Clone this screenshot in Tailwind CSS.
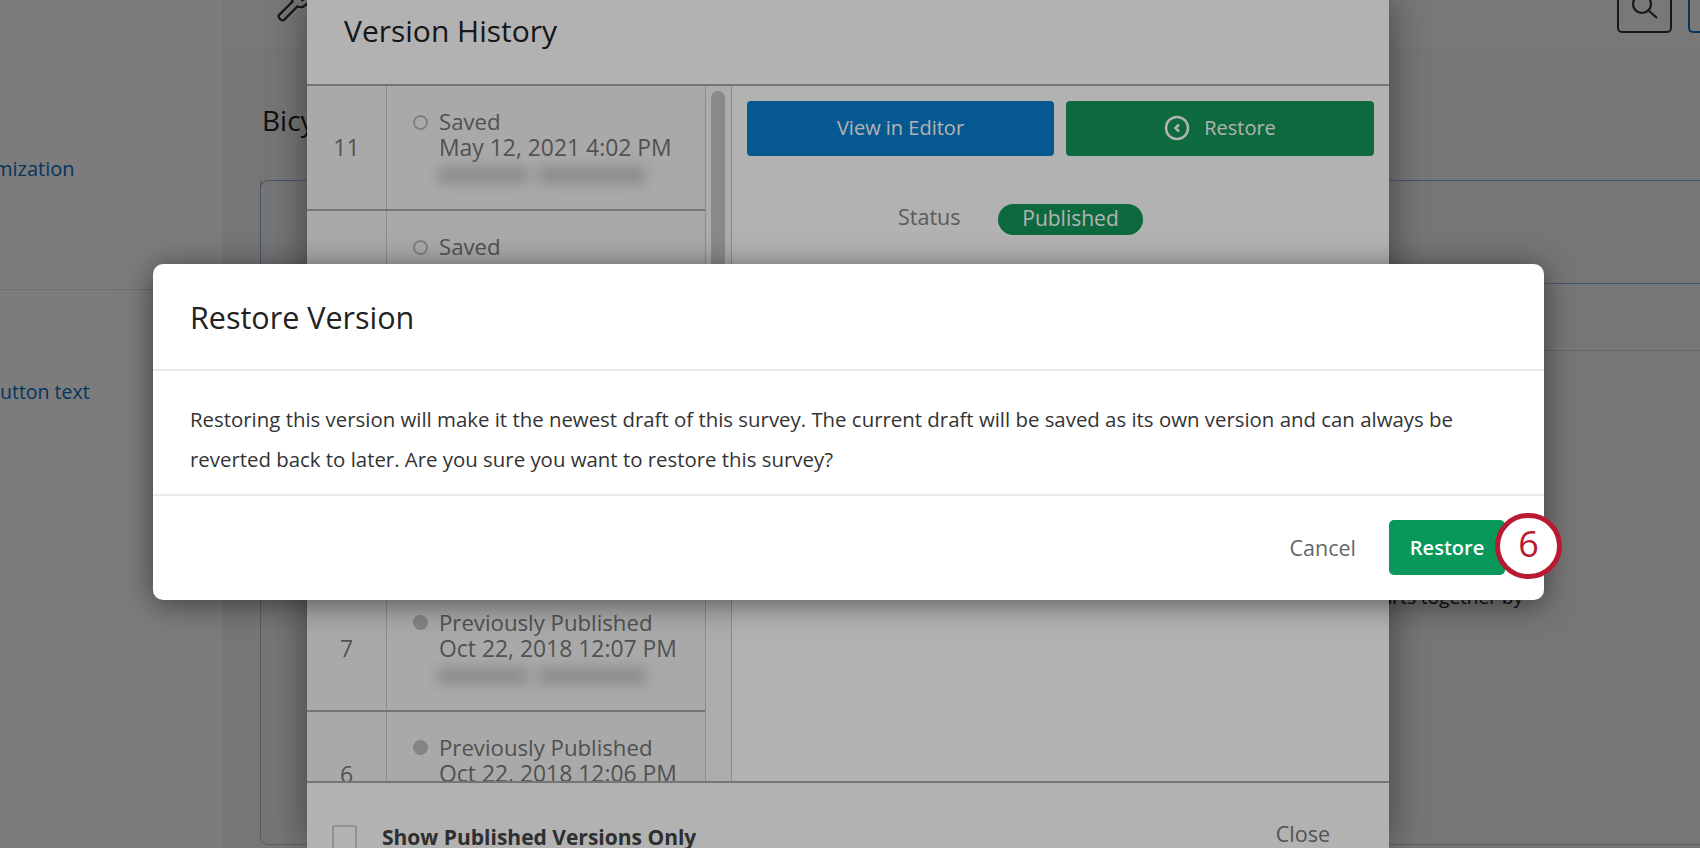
<!DOCTYPE html>
<html lang="en">
<head>
<meta charset="utf-8">
<title>Restore Version</title>
<script src="https://cdn.jsdelivr.net/npm/@tailwindcss/browser@4"></script>
</head>
<body class="m-0 overflow-hidden bg-white font-['Open_Sans',sans-serif]">
<div class="relative h-[848px] w-[1700px] overflow-hidden bg-white">

  <!-- Underlying page -->
  <div class="flex h-full w-full">
    <aside class="flex h-full w-[222px] shrink-0 flex-col bg-white">
      <div class="h-[290px] shrink-0 border-b border-[#e6e6e6] pt-[82px] text-[#0b6fc4]">
        <p class="-ml-[14px] h-[74px] overflow-hidden text-[24px] leading-[30px] text-[#222]">r</p>
        <p class="-ml-[6px] text-[20px] leading-[26px]">mization</p>
      </div>
      <div class="pt-[89px] text-[19.5px] leading-[26px] text-[#0b6fc4]">utton text</div>
    </aside>
    <main class="flex h-full flex-1 flex-col bg-[#f2f2f2]">
      <header class="flex h-[50px] shrink-0 items-end justify-between border-b border-[#e8e8e8] bg-[#f6f6f6] pb-[16px] pl-[52px]">
        <svg class="mb-[8px] h-[42px] w-[42px] text-[#333]" viewBox="0 0 34 34" fill="none" stroke="currentColor" stroke-width="1.9"><path d="M4 26l11-11c-2-5 3-11 9-9l-4 5 3 3 5-4c2 6-4 11-9 9L8 30c-2 1-5-2-4-4z"/></svg>
        <div class="flex items-end gap-[16px]">
          <div class="flex h-[60px] w-[55px] items-end justify-center rounded-[5px] border-2 border-[#333] pb-[6px]">
            <svg class="h-[30px] w-[30px] text-[#333]" viewBox="0 0 30 30" fill="none" stroke="currentColor" stroke-width="2.2"><circle cx="12" cy="9" r="9"/><path d="M18 15l9 8"/></svg>
          </div>
          <div class="h-[60px] w-[12px] rounded-l-[5px] border-2 border-r-0 border-[#0b6fc4]"></div>
        </div>
      </header>
      <div class="flex-1 pt-[48px] pl-[38px]">
        <h2 class="ml-[2px] text-[28px] leading-[44px] text-[#222]">Bicycle</h2>
        <div class="mt-[38px] h-[665px] rounded-bl-[8px] border-b border-l border-[#bcbcbc]">
          <div class="-ml-px h-[104px] rounded-tl-[8px] border-t border-b border-l border-[#8fb3dc]"></div>
          <div class="h-[67px] border-b border-[#d0d0d0]"></div>
          <p class="pt-[233px] pr-[177px] text-right text-[19px] leading-[26px] text-[#222]">parts together by</p>
        </div>
      </div>
    </main>
  </div>
  <div class="absolute inset-0 bg-black/30"></div>

  <!-- Version History dialog -->
  <section class="absolute top-0 left-[307px] flex h-[848px] w-[1082px] flex-col bg-white shadow-[0_0_36px_rgba(0,0,0,0.45)]">
    <div class="flex h-[86px] shrink-0 items-start border-b-2 border-[#a8a8a8] pt-[10px] pl-[37px]">
      <h2 class="text-[30px] leading-[42px] text-[#222]">Version History</h2>
    </div>
    <div class="flex min-h-0 flex-1">
      <div class="h-full w-[398px] shrink-0 overflow-hidden bg-[#f3f3f3]">
        <div class="flex h-[125.2px] border-b-2 border-[#a8a8a8]">
          <div class="flex w-[80px] items-center justify-center border-r border-[#c8c8c8] text-[23px] text-[#757575]">11</div>
          <div class="pt-[23px] pl-[26px]">
            <div class="flex items-center gap-[11px] text-[22.2px] leading-[26px] text-[#757575]"><span class="h-[15px] w-[15px] rounded-full border-2 border-[#b8b8b8]"></span>Saved</div>
            <div class="pl-[26px] text-[22.9px] leading-[26px] text-[#757575]">May 12, 2021 4:02 PM</div>
            <div class="ml-[25px] mt-[6px] flex gap-[10px]"><span class="h-[16px] w-[90px] bg-[#c4c4c4] blur-[7px]"></span><span class="h-[16px] w-[108px] bg-[#c4c4c4] blur-[7px]"></span></div>
          </div>
        </div>
        <div class="flex h-[125.2px] border-b-2 border-[#a8a8a8]">
          <div class="flex w-[80px] items-center justify-center border-r border-[#c8c8c8] text-[23px] text-[#757575]">10</div>
          <div class="pt-[23px] pl-[26px]">
            <div class="flex items-center gap-[11px] text-[22.2px] leading-[26px] text-[#757575]"><span class="h-[15px] w-[15px] rounded-full border-2 border-[#b8b8b8]"></span>Saved</div>
          </div>
        </div>
        <div class="h-[125.2px] border-b-2 border-[#a8a8a8]"><div class="h-full w-[80px] border-r border-[#c8c8c8]"></div></div>
        <div class="h-[125.2px] border-b-2 border-[#a8a8a8]"><div class="h-full w-[80px] border-r border-[#c8c8c8]"></div></div>
        <div class="flex h-[125.2px] border-b-2 border-[#a8a8a8]">
          <div class="flex w-[80px] items-center justify-center border-r border-[#c8c8c8] text-[23px] text-[#757575]">7</div>
          <div class="pt-[23px] pl-[26px]">
            <div class="flex items-center gap-[11px] text-[22.2px] leading-[26px] text-[#757575]"><span class="h-[15px] w-[15px] rounded-full bg-[#bdbdbd]"></span>Previously Published</div>
            <div class="pl-[26px] text-[22.9px] leading-[26px] text-[#757575]">Oct 22, 2018 12:07 PM</div>
            <div class="ml-[25px] mt-[6px] flex gap-[10px]"><span class="h-[16px] w-[90px] bg-[#c4c4c4] blur-[7px]"></span><span class="h-[16px] w-[108px] bg-[#c4c4c4] blur-[7px]"></span></div>
          </div>
        </div>
        <div class="flex h-[125.2px]">
          <div class="flex w-[80px] items-center justify-center border-r border-[#c8c8c8] text-[23px] text-[#757575]">6</div>
          <div class="pt-[23px] pl-[26px]">
            <div class="flex items-center gap-[11px] text-[22.2px] leading-[26px] text-[#757575]"><span class="h-[15px] w-[15px] rounded-full bg-[#bdbdbd]"></span>Previously Published</div>
            <div class="pl-[26px] text-[22.9px] leading-[26px] text-[#757575]">Oct 22, 2018 12:06 PM</div>
          </div>
        </div>
      </div>
      <div class="h-full w-[26px] shrink-0 border-l border-[#c8c8c8] bg-[#f7f7f7] pt-[5px] pl-[5px]">
        <div class="h-[240px] w-[14px] rounded-full bg-[#c4c4c4]"></div>
      </div>
      <div class="h-full flex-1 border-l border-[#c8c8c8] pt-[15px] pl-[15px]">
        <div class="flex gap-[12px]">
          <div class="flex h-[55px] w-[307px] items-center justify-center rounded-[4px] bg-[#0880cf] pb-[2px] text-[20px] text-white">View in Editor</div>
          <div class="flex h-[55px] w-[308px] items-center justify-center gap-[14px] rounded-[4px] bg-[#13985a] pb-[1px] text-[20px] text-white">
            <svg class="h-[26px] w-[26px]" viewBox="0 0 26 26" fill="none" stroke="currentColor" stroke-width="2.5"><circle cx="13" cy="13" r="11"/><path d="M15 9.5L11.5 13l3.5 3.5"/></svg>
            Restore
          </div>
        </div>
        <div class="mt-[45px] flex items-center pl-[151px]">
          <span class="mb-[4px] w-[100px] shrink-0 text-[21.5px] text-[#848484]">Status</span>
          <span class="flex h-[31px] w-[145px] items-center justify-center rounded-full bg-[#13985a] text-[21px] text-white">Published</span>
        </div>
        <div class="mt-[20px] pl-[151px] text-[21.5px] leading-[30px] text-[#848484]">Saved</div>
      </div>
    </div>
    <div class="flex h-[67px] shrink-0 items-start justify-between border-t-2 border-[#a8a8a8] pt-[39px] pr-[59px] pl-[25px]">
      <div class="flex items-start gap-[25px]">
        <span class="mt-[3px] h-[30px] w-[25px] rounded-[3px] border-2 border-[#d0d0d0] bg-white"></span>
        <span class="text-[21px] leading-[30px] font-bold text-[#444]">Show Published Versions Only</span>
      </div>
      <span class="-mt-[3px] text-[21.5px] leading-[30px] text-[#777]">Close</span>
    </div>
  </section>
  <div class="absolute inset-0 bg-black/30"></div>

  <!-- Restore Version modal -->
  <section class="absolute top-[264px] left-[153px] flex h-[336px] w-[1391px] flex-col rounded-[10px] bg-white shadow-[0_4px_30px_rgba(0,0,0,0.5)]">
    <div class="flex h-[107px] shrink-0 items-start border-b-2 border-[#eaeaea] pt-[33px] pl-[37px]">
      <h2 class="text-[30.5px] leading-[40px] text-[#222]">Restore Version</h2>
    </div>
    <div class="h-[125px] shrink-0 border-b-2 border-[#eaeaea] pt-[28px] pr-[60px] pl-[37px] text-[20.4px] leading-[40px] text-[#333]">
      Restoring this version will make it the newest draft of this survey. The current draft will be saved as its own version and can always be reverted back to later. Are you sure you want to restore this survey?
    </div>
    <div class="flex flex-1 items-start justify-end gap-[33px] pt-[24px] pr-[39px]">
      <span class="mt-[13px] text-[21.5px] leading-[30px] text-[#666]">Cancel</span>
      <div class="flex h-[55px] w-[116px] items-center justify-center rounded-[5px] bg-[#07985a] text-[20px] font-semibold text-white">Restore</div>
    </div>
  </section>

  <!-- Step badge -->
  <div class="absolute top-[513px] left-[1495px] flex h-[66px] w-[67px] items-center justify-center rounded-full border-[5px] border-[#b81a33] bg-white pb-[4px] text-[36px] font-medium text-[#b81a33]">6</div>
</div>
</body>
</html>
